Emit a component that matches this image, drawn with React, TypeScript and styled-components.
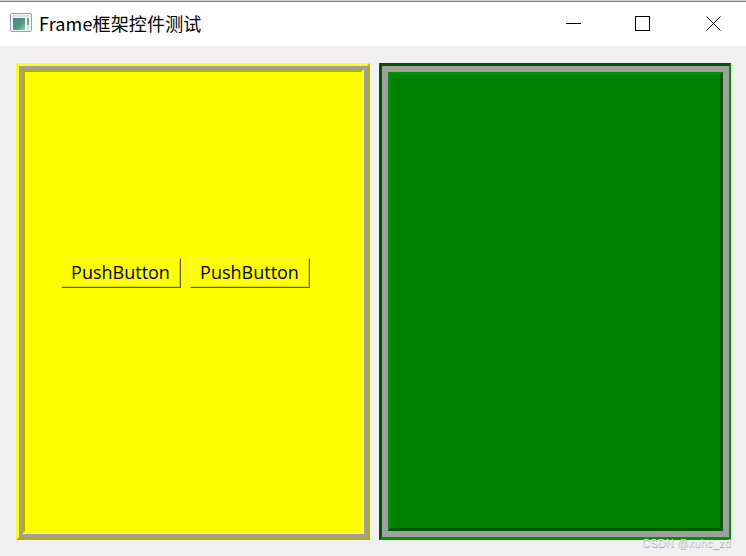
import React from "react";
import styled, { createGlobalStyle } from "styled-components";

const Global = createGlobalStyle`
  html, body { margin: 0; padding: 0; background: #f0f0f0; }
  body { width: 746px; height: 556px; overflow: hidden; font-family: "Noto Sans CJK SC", "Liberation Sans", sans-serif; }
`;

const Window = styled.div`
  width: 746px;
  height: 556px;
  display: flex;
  flex-direction: column;
  position: relative;
  background: #f0f0f0;
`;

const TitleBar = styled.header`
  height: 45px;
  border-top: 1px solid #d0d0d0;
  box-shadow: inset 0 1px 0 #808080;
  background: #fff;
  display: flex;
  align-items: center;
  padding-left: 10px;
`;

const AppIcon = styled.svg`
  margin-top: -2px;
  flex: none;
`;

const Title = styled.span`
  margin: -2px 0 0 5px;
  font: 18px/24px "Noto Sans CJK SC", "Noto Sans", sans-serif;
  letter-spacing: 0.15px;
  color: #000;
  flex: 1;
`;

const WinButton = styled.div<{ $w: number }>`
  width: ${(p) => p.$w}px;
  height: 44px;
  margin-top: 1px;
  display: flex;
  align-items: center;
  justify-content: center;
  flex: none;
`;

const Body = styled.main`
  flex: 1;
  display: flex;
  padding: 17px 15px 16px 16px;
  gap: 9px;
`;

const YellowOuter = styled.section`
  width: 354px;
  box-sizing: border-box;
  border-style: solid;
  border-width: 3px;
  border-color: #ffff1e #b0b000 #b0b000 #ffff1e;
  background: #a0a0a0;
  padding: 3px;
  display: flex;
`;

const YellowInner = styled.div`
  flex: 1;
  box-sizing: border-box;
  border-style: solid;
  border-width: 3px;
  border-color: #b0b000 #ffff30 #ffff30 #b0b000;
  background: #ffff00;
  display: flex;
  align-items: flex-start;
  justify-content: flex-start;
  padding: 186px 0 0 36px;
  gap: 9px;
`;

const GreenOuter = styled.section`
  width: 352px;
  box-sizing: border-box;
  border-style: solid;
  border-width: 3px 2px 3px 3px;
  border-color: #005600 #009000 #009000 #005600;
  background: #a0a0a0;
  padding: 6px;
  display: flex;
`;

const GreenInner = styled.div`
  flex: 1;
  box-sizing: border-box;
  border-style: solid;
  border-width: 3px;
  border-color: #009000 #005600 #005600 #009000;
  background: #008000;
`;

const PushButton = styled.button`
  width: 120px;
  height: 30px;
  box-sizing: border-box;
  padding: 0 1px 2px 0;
  border-style: solid;
  border-width: 1px;
  border-color: #ffff30 #5a5a00 #5a5a00 #ffff30;
  box-shadow: inset -1px -1px 0 #d8d800;
  background: #ffff00;
  color: #000;
  font: 18px/26px "Open Sans", "Noto Sans", sans-serif;
`;

const Watermark = styled.span`
  position: absolute;
  right: 15px;
  bottom: 7px;
  font: 11px/12px "Liberation Sans", sans-serif;
  letter-spacing: 0.2px;
  color: #eeeeee;
  text-shadow: 0.5px 0.5px 0.5px rgba(90, 90, 90, 0.55);
`;

export default function App() {
  return (
    <Window>
      <Global />
      <TitleBar>
        <AppIcon width="24" height="20" viewBox="0 0 24 20">
          <defs>
            <linearGradient id="panel" x1="0" y1="0" x2="1" y2="1">
              <stop offset="0" stopColor="#4d7f95" />
              <stop offset="0.6" stopColor="#4f9a7e" />
              <stop offset="1" stopColor="#a8cdbf" />
            </linearGradient>
          </defs>
          <rect x="0.5" y="0.5" width="21" height="18" rx="1.5" fill="#f2f4f5" stroke="#9aa0a6" />
          <rect x="2" y="2" width="18" height="2" fill="#dfe3e6" />
          <rect x="3" y="5" width="12" height="12" fill="url(#panel)" />
          <rect x="17" y="5" width="2" height="7" fill="#6fa88f" />
          <rect x="17" y="12" width="2" height="5" fill="#d4e2dc" />
        </AppIcon>
        <Title>Frame框架控件测试</Title>
        <WinButton $w={60}>
          <svg width="16" height="16" viewBox="0 0 16 16">
            <path d="M0 7.5H15" stroke="#000" fill="none" />
          </svg>
        </WinButton>
        <WinButton $w={78}>
          <svg width="16" height="16" viewBox="0 0 16 16">
            <rect x="0.5" y="0.5" width="14" height="14" stroke="#000" fill="none" />
          </svg>
        </WinButton>
        <WinButton $w={64}>
          <svg width="16" height="16" viewBox="0 0 16 16">
            <path d="M0.5 0.5L14.5 14.5M14.5 0.5L0.5 14.5" stroke="#000" fill="none" />
          </svg>
        </WinButton>
      </TitleBar>
      <Body>
        <YellowOuter>
          <YellowInner>
            <PushButton>PushButton</PushButton>
            <PushButton>PushButton</PushButton>
          </YellowInner>
        </YellowOuter>
        <GreenOuter>
          <GreenInner />
        </GreenOuter>
      </Body>
      <Watermark>CSDN @xuhc_zd</Watermark>
    </Window>
  );
}
